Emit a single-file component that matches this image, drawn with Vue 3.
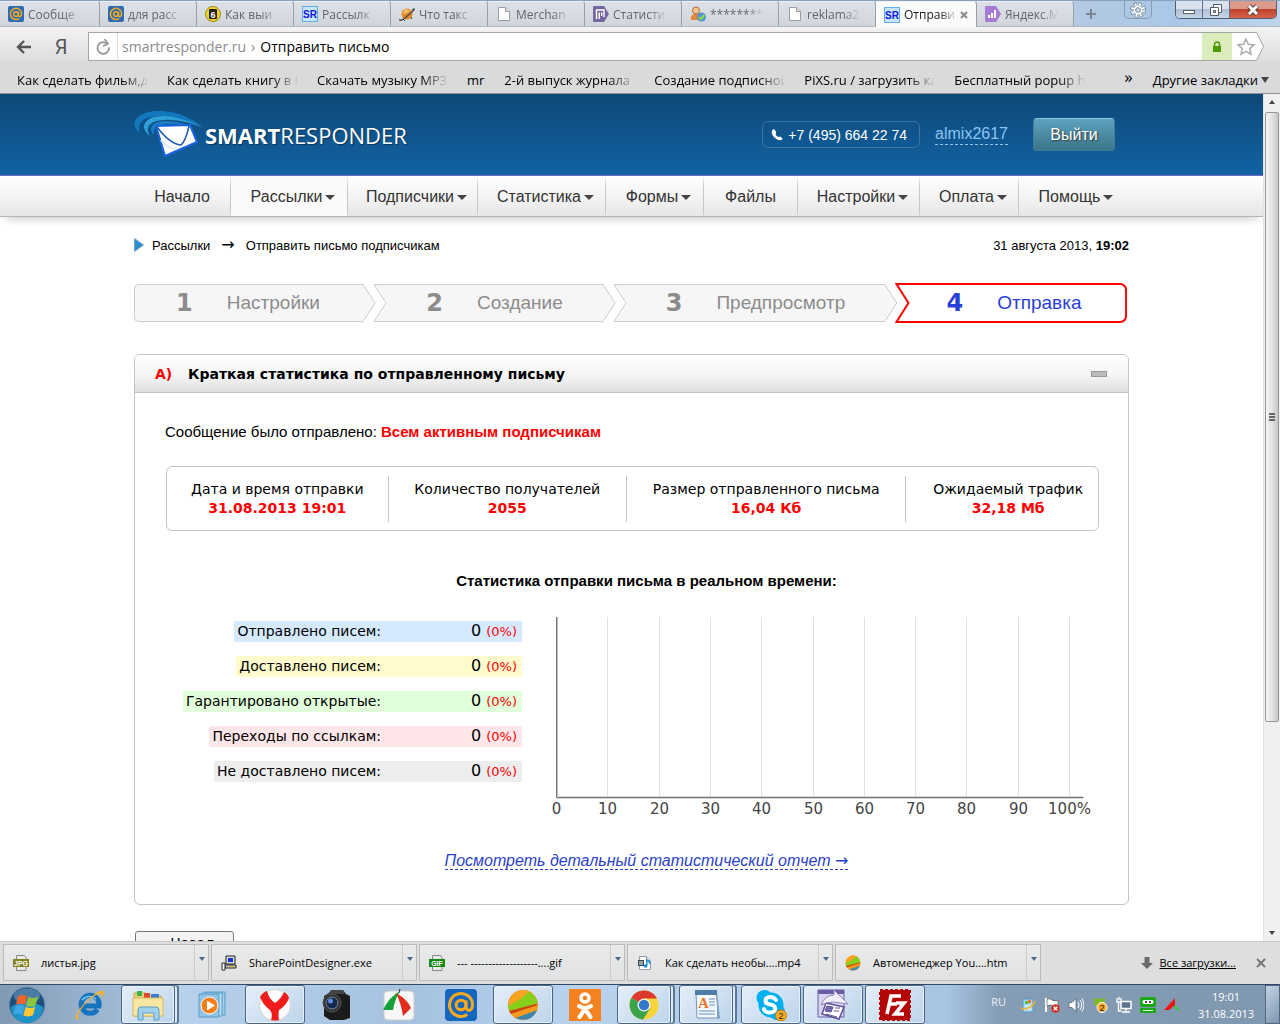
<template>
  <div class="desktop">
    <header class="titlebar">
      <div
        v-for="(tab, i) in tabs"
        :key="i"
        class="tab"
        :class="{ active: tab.active }"
      >
        <svg class="icon16" viewBox="0 0 16 16" v-html="icons[tab.icon]"></svg>
        <span class="tab-title">{{ tab.title }}</span>
        <button v-if="tab.active" class="tab-close" aria-label="Закрыть вкладку">
          <svg viewBox="0 0 8 8" width="8" height="8">
            <path d="M1 1l6 6M7 1l-6 6" stroke="#8a8a8a" stroke-width="2" />
          </svg>
        </button>
      </div>
      <button class="tab-new" aria-label="Новая вкладка">
        <svg viewBox="0 0 12 12" width="12" height="12">
          <path d="M6 1v10M1 6h10" stroke="#7b8694" stroke-width="2" />
        </svg>
      </button>
      <button class="gear" aria-label="Настройки браузера">
        <svg viewBox="0 0 16 16" width="16" height="16">
          <circle cx="8" cy="8" r="5.500" fill="none" stroke="#75818f" stroke-width="5" stroke-dasharray="2.700 1.620" />
          <circle cx="8" cy="8" r="5.500" fill="none" stroke="#fff" stroke-width="3.400" stroke-dasharray="1.700 2.620" stroke-dashoffset="-.5" />
          <circle cx="8" cy="8" r="4.200" fill="#fff" />
          <circle cx="8" cy="8" r="2.300" fill="#cfe0f2" stroke="#75818f" />
        </svg>
      </button>
      <div class="window-buttons">
        <button class="win" aria-label="Свернуть">
          <svg viewBox="0 0 14 14" width="14" height="14"><rect x="1.500" y="7.500" width="11" height="3" fill="#fff" stroke="#565d68" /></svg>
        </button>
        <button class="win" aria-label="Развернуть">
          <svg viewBox="0 0 14 14" width="14" height="14">
            <path d="M4.500 1.500h8v8h-8z" fill="#fff" stroke="#565d68" />
            <path d="M1.500 4.500h8v8h-8z" fill="#fff" stroke="#565d68" />
            <path d="M4.500 7.500h2v2h-2z" fill="#b9c9da" stroke="#565d68" />
          </svg>
        </button>
        <button class="win win-close" aria-label="Закрыть">
          <svg viewBox="0 0 14 14" width="14" height="14">
            <path d="M3 3l8 8M11 3l-8 8" stroke="#5a3a3a" stroke-width="5" />
            <path d="M3 3l8 8M11 3l-8 8" stroke="#fff" stroke-width="3" />
          </svg>
        </button>
      </div>
    </header>

    <div class="toolbar">
      <button class="tool" aria-label="Назад">
        <svg viewBox="0 0 16 14" width="16" height="14">
          <path d="M15 7H2M8 1L2 7l6 6" fill="none" stroke="#555" stroke-width="2.400" />
        </svg>
      </button>
      <button class="tool tool-ya">Я</button>
      <div class="address">
        <button class="reload" aria-label="Обновить">
          <svg viewBox="0 0 16 16" width="16" height="16">
            <path d="M14 8.500A5.800 5.800 0 1 1 8.200 3.200L12 4.200" fill="none" stroke="#999" stroke-width="1.800" />
            <path d="M9.500 0l3.500 4.600-5 2.600" fill="none" stroke="#999" stroke-width="1.700" />
          </svg>
        </button>
        <span class="host">smartresponder.ru</span>
        <span class="host">›</span>
        <span class="doc-title">Отправить письмо</span>
        <span class="lock">
          <svg viewBox="0 0 10 12" width="10" height="12">
            <path d="M2.500 6V3.500a2.500 2.500 0 0 1 5 0V6" fill="none" stroke="#4d9a00" stroke-width="1.500" />
            <path d="M1 5h8v6H1z" fill="#4d9a00" />
          </svg>
        </span>
      </div>
      <button class="star" aria-label="Добавить в закладки">
        <svg viewBox="0 0 32 29" width="32" height="29">
          <path d="M0 .500h24.500l7 14-7 14H0" fill="#fff" stroke="#a5a5a5" />
          <path d="M14 7l2.300 5.200 5.700.6-4.300 3.800 1.300 5.600-5-2.900-5 2.900 1.300-5.600L6 12.800l5.700-.6z" fill="#fff" stroke="#aaa" stroke-width="1.500" />
        </svg>
      </button>
    </div>

    <nav class="bookmarks">
      <a
        v-for="b in bookmarks"
        :key="b"
        href="#"
        class="bookmark"
        :class="{ long: b.length > 2 }"
      >{{ b }}</a>
      <button class="more-bookmarks">»</button>
      <button class="other-bookmarks">Другие закладки <i class="caret"></i></button>
    </nav>

    <div class="viewport">
      <main class="page">
        <div class="site-header">
          <div class="inner header-inner">
            <a href="#" class="logo">
              <svg viewBox="0 0 72 50" width="72" height="50">
                <path d="M7 23C-6 13 5 0 29 1c18 1 31 8 43 18C57 10 43 6 29 6 11 6 3 12 7 23z" fill="#1278bd" />
                <path d="M17 26C5 17 12 6 30 6c15 0 29 6 40 12-12-5-26-9-39-8-15 1-19 7-14 16z" fill="#2f9fd8" />
                <path d="M21 25C14 18 20 11 33 11c11 0 20 3 28 7-9-3-17-4-26-4-12 1-15 5-14 11z" fill="#1b7cc0" />
                <path d="M23 16l34-1 7 17-32 14z" fill="#fff" stroke="#1763e0" stroke-width="2" stroke-linejoin="round" />
                <path d="M24 17c6 8 14 17 24 18 4-3 6-10 8-19" fill="none" stroke="#1757b5" stroke-width="1.500" />
                <path d="M28 30c3 5 8 8 15 9" fill="none" stroke="#d9effc" stroke-width="2" />
              </svg>
              <span class="logo-text"><b>SMART</b>RESPONDER</span>
            </a>
            <div class="account">
              <span class="phone">
                <svg viewBox="0 0 12 12" width="12" height="12">
                  <path d="M2 .500C0 2 .500 5 3 8s6 4 8 2.500c.700-.500.600-1 0-1.500L9.300 7.800c-.600-.400-1-.300-1.500.2-.6.600-3-1.800-3.300-3 .700-.5.900-1 .600-1.600L4 1C3.500.200 2.700 0 2 .500z" fill="#fff" />
                </svg>
                +7 (495) 664 22 74
              </span>
              <a href="#" class="login">almix2617</a>
              <button class="exit">Выйти</button>
            </div>
          </div>
        </div>

        <nav class="site-nav">
          <div class="inner nav-inner">
            <a
              v-for="item in menu"
              :key="item.title"
              href="#"
              class="nav-item"
              :class="{ current: item.current, sub: item.sub }"
              :style="{ flexBasis: item.width + 'px' }"
            >{{ item.title }}<i v-if="item.sub" class="caret"></i></a>
          </div>
        </nav>

        <div class="content inner">
          <div class="crumbs">
            <svg viewBox="0 0 10 14" width="10" height="14">
              <path d="M.500.500l9 6.500-9 6.500z" fill="#2b8fcd" stroke="#7aa3bd" />
            </svg>
            <a href="#">Рассылки</a>
            <span class="crumb-arrow">→</span>
            <span>Отправить письмо подписчикам</span>
            <span class="date">31 августа 2013, <b>19:02</b></span>
          </div>

          <ol class="steps">
            <li
              v-for="(step, i) in steps"
              :key="step.title"
              class="step"
              :class="{ first: i === 0, active: step.active }"
              :style="{ flexGrow: step.width }"
            >
              <svg class="step-shape" :viewBox="`0 0 ${step.width} 40`" preserveAspectRatio="none">
                <path :d="stepPath(i, step.width)" />
              </svg>
              <span class="step-number">{{ i + 1 }}</span>
              <span class="step-title">{{ step.title }}</span>
            </li>
          </ol>

          <section class="panel">
            <div class="panel-head">
              <span class="panel-letter">A)</span>
              <h2>Краткая статистика по отправленному письму</h2>
              <button class="collapse" aria-label="Свернуть блок"></button>
            </div>
            <div class="panel-body">
              <p class="sent-to">Сообщение было отправлено: <b>Всем активным подписчикам</b></p>

              <div class="summary">
                <div
                  v-for="cell in summary"
                  :key="cell.title"
                  class="summary-cell"
                  :style="{ width: (cell.width / 933) * 100 + '%' }"
                >
                  <span>{{ cell.title }}</span>
                  <b>{{ cell.value }}</b>
                </div>
              </div>

              <h3>Статистика отправки письма в реальном времени:</h3>

              <div class="realtime">
                <ul class="counters">
                  <li v-for="c in counters" :key="c.title" :class="c.color">
                    <span class="counter-title">{{ c.title }}</span>
                    <span class="counter-value">0</span>
                    <span class="counter-percent">(0%)</span>
                  </li>
                </ul>
                <svg class="chart" viewBox="0 0 550 206" width="550" height="206">
                  <path v-for="n in 10" :key="n" :d="`M${gridX(n)} 1v182`" stroke="#e0e0e0" />
                  <path d="M6 181.500h527" stroke="#d5d5d5" stroke-width="3" />
                  <path d="M6.500 1v180.500h527" fill="none" stroke="#777" />
                  <path d="M7.500 1v179" stroke="#bbb" />
                  <text v-for="n in 11" :key="n" :x="gridX(n - 1)" y="198">{{ (n - 1) * 10 }}{{ n === 11 ? '%' : '' }}</text>
                </svg>
              </div>

              <p class="report"><a href="#">Посмотреть детальный статистический отчет <span class="arrow">→</span></a></p>
            </div>
          </section>

          <button class="back">← Назад</button>
        </div>
      </main>

      <div class="scrollbar">
        <i class="scroll-up"></i>
        <div class="thumb"><i></i><i></i><i></i></div>
        <i class="scroll-down"></i>
      </div>
    </div>

    <div class="downloads">
      <div v-for="d in downloads" :key="d.name" class="download">
        <svg class="icon16" viewBox="0 0 16 16" v-html="icons[d.icon]"></svg>
        <span class="download-name">{{ d.name }}</span>
        <button class="download-menu" aria-label="Действия"><i class="caret"></i></button>
      </div>
      <div class="downloads-right">
        <svg viewBox="0 0 12 12" width="12" height="12"><path d="M3.500 0h5v6H12l-6 6-6-6h3.500z" fill="#6b6b6b" /></svg>
        <a href="#">Все загрузки...</a>
        <button class="downloads-close" aria-label="Закрыть панель">
          <svg viewBox="0 0 10 10" width="10" height="10"><path d="M1 1l8 8M9 1L1 9" stroke="#777" stroke-width="2" /></svg>
        </button>
      </div>
    </div>

    <footer class="taskbar">
      <button class="start" aria-label="Пуск">
        <svg viewBox="0 0 36 36" width="36" height="36">
          <circle cx="18" cy="18" r="17.500" fill="#1d4f7c" stroke="#4c7ba3" />
          <path d="M2 20a16 16 0 0 0 32 0c-8-6-24-6-32 0z" fill="#1f92c8" />
          <ellipse cx="18" cy="9" rx="13" ry="7.500" fill="#6e9cc0" opacity=".6" />
          <path d="M9 9.500c3.500-2 6-2 9-.5L15.700 18C13 16.300 10.500 16.300 7 18z" fill="#f0642a" />
          <path d="M19.300 9.800c3.500 1.700 6 1.700 9.700-.3L26.500 18.500c-3.500 1.700-6.500 1.700-9.500 0z" fill="#8cc63e" />
          <path d="M6.500 19.300c3.500-1.700 6-1.700 9 0L13.300 28c-3-1.700-5.500-1.700-9-.2z" fill="#3fa7e6" />
          <path d="M16.700 19.800c3.200 1.700 6.200 1.700 9.500 0L24 28c-3.500 1.900-6.500 1.900-9.700.2z" fill="#fdc82f" />
        </svg>
      </button>
      <button
        v-for="app in apps"
        :key="app.icon"
        class="app"
        :class="{ open: app.open, stacked: app.stack }"
        :aria-label="app.label"
      >
        <svg viewBox="0 0 32 32" width="32" height="32" v-html="icons[app.icon]"></svg>
      </button>

      <div class="tray">
        <span class="lang">RU</span>
        <svg v-for="t in tray" :key="t" class="icon16" viewBox="0 0 16 16" v-html="icons[t]"></svg>
        <div class="clock">
          <span>19:01</span>
          <span>31.08.2013</span>
        </div>
        <button class="show-desktop" aria-label="Показать рабочий стол"></button>
      </div>
    </footer>
  </div>
</template>

<script setup>
const tabs = [
  { title: 'Сообще', icon: 'mail' },
  { title: 'для расс', icon: 'mail' },
  { title: 'Как выи', icon: 'coin' },
  { title: 'Рассылк', icon: 'sr' },
  { title: 'Что такс', icon: 'planet' },
  { title: 'Merchan', icon: 'file' },
  { title: 'Статисти', icon: 'statist' },
  { title: '*********', icon: 'user' },
  { title: 'reklama2', icon: 'file' },
  { title: 'Отправи', icon: 'sr', active: true },
  { title: 'Яндекс.М', icon: 'metrika' }
]

const bookmarks = [
  'Как сделать фильм,д',
  'Как сделать книгу в I',
  'Скачать музыку MP3',
  'mr',
  '2-й выпуск журнала',
  'Создание подписной',
  'PiXS.ru / загрузить ка',
  'Бесплатный popup h'
]

const menu = [
  { title: 'Начало', width: 97 },
  { title: 'Рассылки', width: 117, sub: true, current: true },
  { title: 'Подписчики', width: 130, sub: true },
  { title: 'Статистика', width: 128, sub: true },
  { title: 'Формы', width: 98, sub: true },
  { title: 'Файлы', width: 94 },
  { title: 'Настройки', width: 122, sub: true },
  { title: 'Оплата', width: 99, sub: true },
  { title: 'Помощь', width: 106, sub: true }
]

const steps = [
  { title: 'Настройки', width: 243 },
  { title: 'Создание', width: 244 },
  { title: 'Предпросмотр', width: 286 },
  { title: 'Отправка', width: 233, active: true }
]

const summary = [
  { title: 'Дата и время отправки', value: '31.08.2013 19:01', width: 222 },
  { title: 'Количество получателей', value: '2055', width: 239 },
  { title: 'Размер отправленного письма', value: '16,04 Кб', width: 280 },
  { title: 'Ожидаемый трафик', value: '32,18 Мб', width: 192 }
]

const counters = [
  { title: 'Отправлено писем:', color: 'blue' },
  { title: 'Доставлено писем:', color: 'yellow' },
  { title: 'Гарантировано открытые:', color: 'green' },
  { title: 'Переходы по ссылкам:', color: 'pink' },
  { title: 'Не доставлено писем:', color: 'grey' }
]

const downloads = [
  { name: 'листья.jpg', icon: 'jpg' },
  { name: 'SharePointDesigner.exe', icon: 'exe' },
  { name: '--- -------------------....gif', icon: 'gif' },
  { name: 'Как сделать необы....mp4', icon: 'mp4' },
  { name: 'Автоменеджер You....htm', icon: 'ball' }
]

const apps = [
  { icon: 'ie', label: 'Internet Explorer' },
  { icon: 'explorer', label: 'Проводник', open: true, stack: true },
  { icon: 'player', label: 'Проигрыватель' },
  { icon: 'yandex', label: 'Яндекс.Браузер', open: true },
  { icon: 'camera', label: 'Камера' },
  { icon: 'faststone', label: 'Захват экрана' },
  { icon: 'agent', label: 'Почта' },
  { icon: 'automanager', label: 'Автоменеджер', open: true },
  { icon: 'ok', label: 'Одноклассники' },
  { icon: 'chrome', label: 'Chrome', open: true, stack: true },
  { icon: 'wordpad', label: 'WordPad', open: true, stack: true },
  { icon: 'skype', label: 'Skype', open: true },
  { icon: 'designer', label: 'SharePoint Designer', open: true },
  { icon: 'filezilla', label: 'FileZilla', open: true }
]

const tray = ['trayPaint', 'trayFlag', 'traySound', 'traySkype', 'trayNet', 'trayRobot', 'trayTriangle']

const gridX = (n) => 6.5 + Math.round(n * 51.3)

// Chevron outline: the first step has a flat left side, the last one a flat right side
const stepPath = (i, w) => {
  if (i === 0) {
    return `M4.500 1.500H${w - 13}l12 18.500-12 18.500H4.500a4 4 0 0 1-4-4V5.500a4 4 0 0 1 4-4z`
  }
  if (i === steps.length - 1) {
    return `M1.500 1H${w - 7}a6 6 0 0 1 6 6v26a6 6 0 0 1-6 6H1.500l12-19z`
  }
  return `M1 1.500H${w - 13}l12 18.500-12 18.500H1l12-18.500z`
}

const file = '<path d="M2.500 1.500h7l4 4v9h-11z" fill="#fff" stroke="#9a9da3"/><path d="M9.500 1.500v4h4" fill="#e4e4e4" stroke="#9a9da3"/>'
const at = (cx, cy, r, w) => `<circle cx="${cx}" cy="${cy}" r="${r * 0.42}" fill="none" stroke="#f8a91f" stroke-width="${w}"/><path d="M${cx + r * 0.45} ${cy - r * 0.4}v${r * 0.55}c0 ${r * 0.5} ${r * 0.55} ${r * 0.4} ${r * 0.55} ${-r * 0.2}A${r} ${r} 0 1 0 ${cx + r * 0.55} ${cy + r * 0.83}" fill="none" stroke="#f8a91f" stroke-width="${w}"/>`
const printer = (color, name) => `<path d="M3.500.500h8l1.500 2v13h-9.500z" fill="#e9e9e9" stroke="#888"/><path d="M0 4h16v8H0z" fill="${color}"/><text x="8" y="10.500" font-size="7" font-weight="700" fill="#fff" text-anchor="middle" font-family="Liberation Sans">${name}</text>`
const ball = (s) => `<g transform="scale(${s})"><circle cx="16" cy="16" r="15" fill="#ee8c1c"/><path d="M2.500 11Q7 1 16 1q6 0 10 4L3 18Q1 15 2.500 11z" fill="#f8a421"/><path d="M1 17l11-6L22 3q6 2 9 11L4 22Q1 20 1 17z" fill="#86cf1b"/><path d="M2 22l27-7 2 1L4 25z" fill="#c9450f"/><path d="M8 29l22-8Q24 35 8 29z" fill="#3b88a8"/><path d="M4 25l27-9-1 5L8 29z" fill="#f39a1f"/></g>`

const icons = {
  file,
  mail: `<rect width="16" height="16" rx="2" fill="#2b6cb2"/>${at(8, 8, 5.6, 1.5)}`,
  coin: '<circle cx="8" cy="8" r="7.500" fill="#f2d32b" stroke="#a08a1a"/><rect x="4" y="3" width="8" height="10" rx="1" fill="#222"/><text x="8" y="11.500" font-size="9" font-weight="700" fill="#fff" text-anchor="middle" font-family="Liberation Sans">6</text>',
  sr: '<rect x=".5" y=".5" width="15" height="15" fill="#c6e6fb" stroke="#62aee6"/><text x="8" y="12" font-size="10" font-weight="700" fill="#1414e6" text-anchor="middle" font-family="Liberation Sans">SR</text>',
  planet: '<circle cx="8" cy="8" r="5.500" fill="#e18a2a"/><path d="M5 4q3-2 6 1-4 3-7 3z" fill="#f7bd66"/><path d="M13 4c3-2 3-1 1 1L6 12c-4 3-6 3-5 1" fill="none" stroke="#444" stroke-width="1.200"/><path d="M4 13l2 2M12 11l1 2" stroke="#444"/>',
  statist: '<path d="M1 0h10l5 8-5 8H1q-1 0-1-1V1q0-1 1-1z" fill="#75669f"/><path d="M3.500 13V4h7.500V11M6.200 13V6.500M8.700 10V6.500" fill="none" stroke="#fff" stroke-width="1.400"/>',
  metrika: '<path d="M1 0h10l5 8-5 8H1q-1 0-1-1V1q0-1 1-1z" fill="#a77bd3"/><path d="M3 12V9h2v3zM6 12V7h2v5zM9 12V4h2v8z" fill="#fff"/>',
  user: '<path d="M1 14c-1-5 2-6 5-6s5 2 5 6z" fill="#e8853c"/><circle cx="6" cy="4.500" r="3.500" fill="#f4c48c" stroke="#b0683a"/><circle cx="11.500" cy="11" r="4.500" fill="#4d94d2"/><path d="M9 11l2 2 3.500-4" fill="none" stroke="#8bd84a" stroke-width="2"/>',
  jpg: printer('#85831c', 'JPG'),
  gif: printer('#138a13', 'GIF'),
  exe: '<path d="M5 1h9v8H5z" fill="#ddd" stroke="#222"/><path d="M7 3h5v4H7z" fill="#1234d8"/><path d="M4 10h11v3H4z" fill="#ccc" stroke="#222"/><path d="M1 8h3v7H1z" fill="#fff" stroke="#222"/><path d="M9 11.500h4" stroke="#d8c400"/>',
  mp4: `${file}<path d="M1 5h6v6H1z" fill="#345"/><path d="M2 7h4M2 9h4" stroke="#fff"/><circle cx="8.500" cy="11" r="1.800" fill="#1d8fdc"/><path d="M9.800 11V5q3 1 3 4" fill="none" stroke="#1d8fdc" stroke-width="1.500"/>`,
  ball: ball(0.5),
  ie: '<path d="M24.500 20.500A9 9 0 1 1 26 17H9" fill="none" stroke="#1673bd" stroke-width="5"/><path d="M9 11c3-4 10-5 14-1" fill="none" stroke="#7cc8f0" stroke-width="1.500"/><path d="M6 30c-6 2-4-5 4-14S27 0 30 2c2 1 0 5-2 8 1-4 0-6-2-5C20 6 8 18 5 26c0 2 0 3 1 4z" fill="#f3b32a"/>',
  explorer: '<path d="M2 4h11l2 3h14v20H2z" fill="#eccf76" stroke="#c9a548"/><path d="M5 2h5v5H5z" fill="#38b54a"/><path d="M12 4h6v5h-6z" fill="#e0482f"/><path d="M19 5h8v5h-8z" fill="#3b7fd0"/><path d="M1 9h30v18H1z" fill="#f9e7a1" stroke="#d8b95e"/><path d="M6 31V21q0-3 3-3h15q3 0 3 3v10h-5v-7H11v7z" fill="#9dd1ee" stroke="#5c9dc5"/>',
  player: '<path d="M8 3h20v23H8z" fill="#9dcbe8" stroke="#5b9cc8"/><path d="M5 4h20v23H5z" fill="#bcdff2" stroke="#5b9cc8"/><path d="M2 5h20v23H2z" fill="#8fc3e4" stroke="#5b9cc8"/><circle cx="12.500" cy="16.500" r="8.500" fill="#f57f17" stroke="#fff"/><path d="M10 11.500l8 5-8 5z" fill="#fff"/>',
  yandex: '<circle cx="16" cy="16" r="15.500" fill="#fff" stroke="#d5d5d5"/><path d="M1 8Q4 3 8 2q2 8 8 12 6-4 9-11 4 2 5 6-3 8-10 12-1 4 0 10-4 1-8 0 2-6-1-10Q4 16 1 8z" fill="#f01c1c"/>',
  camera: '<path d="M3 7l5-3 2-3h12l3 4 4 2v22l-6 2H9l-6-4z" fill="#1b1b1b"/><path d="M10 1h12l2 4H8z" fill="#444"/><circle cx="11" cy="14" r="9" fill="#333" stroke="#555"/><circle cx="11" cy="14" r="6" fill="#16294a" stroke="#7a8aa0"/><circle cx="9.500" cy="12" r="2.500" fill="#5a8fe0"/>',
  faststone: '<rect x="1" y="2" width="30" height="29" rx="4" fill="#f7f7f7" stroke="#ccc"/><path d="M16 4l1-4" stroke="#222"/><path d="M17 2Q6 8 0 21l10 0q2-11 7-19z" fill="#18a03a"/><path d="M13 4q12 7 15 15l-8 8Q18 14 13 4z" fill="#e12b1c"/>',
  agent: `<rect width="32" height="32" rx="4" fill="#1467bd"/>${at(16, 16, 11.5, 3)}`,
  automanager: ball(1),
  ok: '<path d="M0 0h32v32H0z" fill="#f58220"/><circle cx="16" cy="9" r="4" fill="none" stroke="#fff" stroke-width="3.500"/><path d="M10 17q6 4 12 0M16 20l-5.500 8M16 20l5.500 8" fill="none" stroke="#fff" stroke-width="4" stroke-linecap="round"/>',
  chrome: '<circle cx="16" cy="16" r="14.500" fill="#fbd43b"/><path d="M16 16L3.500 8.700A14.500 14.500 0 0 0 15 30.500l7-11z" fill="#3aa44a"/><path d="M16 16L3.500 8.700A14.500 14.500 0 0 1 29 9.500H16z" fill="#dc3a2c"/><circle cx="16" cy="16" r="6.500" fill="#f4f4f4"/><circle cx="16" cy="16" r="5.200" fill="#3478c8"/>',
  wordpad: '<path d="M6 3h20l3 26H7z" fill="#f4f8fc" stroke="#7595b5"/><path d="M5 1h22v5H5z" fill="#4f7da8"/><path d="M27 3l3 26-3 1z" fill="#7fa3c6"/><text x="8" y="19" font-size="15" font-weight="700" fill="#e8761d" font-family="Liberation Serif">A</text><path d="M19 10h6M19 13h6M19 16h6M9 22h16M9 25h16" stroke="#5f8fc0"/>',
  skype: '<circle cx="16" cy="16" r="12.500" fill="#00aff0"/><circle cx="9.500" cy="9" r="8" fill="#00aff0"/><circle cx="22" cy="23" r="8" fill="#00aff0"/><path d="M21 11q-2-3-6-3c-6 0-6 7 0 7.500 7 .5 7 8 0 8-4 0-6-2-6-3.500" fill="none" stroke="#fff" stroke-width="4" stroke-linecap="round"/><circle cx="26" cy="26.500" r="5.500" fill="#fbac27" stroke="#c77b00"/><text x="26" y="30" font-size="9" fill="#222" text-anchor="middle" font-family="Liberation Sans">2</text>',
  designer: '<path d="M1 1h26v27H1z" fill="#d9d4ee" stroke="#6a5da8"/><path d="M1 1h26v4H1z" fill="#6a5da8"/><path d="M9 14l18 4-5 12-17-5z" fill="#fff" stroke="#5d519a" stroke-width="1.500"/><path d="M10 17l6 1-2 5-6-1zM18 19h5M17 22h5M9 25l11 3" fill="#7468b0" stroke="#5d519a"/><path d="M4 16Q8 6 17 6V1l14 14-14-2q-8 0-13 3z" fill="#f2f0fa" stroke="#8d84bb"/>',
  filezilla: '<path d="M1 1h30v30H1z" fill="#b50606" stroke="#b50606" stroke-width="2" stroke-dasharray="3 2"/><path d="M8 25L12 7h10M10 15h8M17 14h8L16 25h9" fill="none" stroke="#fff" stroke-width="3.600"/>',
  trayPaint: '<path d="M3 2h10v13H3z" fill="#a8d8f2" stroke="#5598c0"/><path d="M8 3h3v3H8z" fill="#e8762c"/><path d="M5 4h3v3H5z" fill="#58b947"/><path d="M5 9h6M5 12h6" stroke="#fff"/><path d="M1 10c0 5 12 1 14-6" fill="none" stroke="#f3b32a" stroke-width="1.500"/>',
  trayFlag: '<path d="M2 1v14" stroke="#fff" stroke-width="2"/><path d="M3 2q3-1 5 1t6 0v7q-3 1-5-1t-6 0z" fill="#fff" stroke="#555" stroke-width=".7"/><circle cx="11.500" cy="11.500" r="4.200" fill="#d92b1f"/><path d="M9.800 9.800l3.400 3.400M13.200 9.800l-3.400 3.400" stroke="#fff" stroke-width="1.500"/>',
  traySound: '<path d="M1 5.500h3l4-4v13l-4-4H1z" fill="#fff" stroke="#4d5a6a" stroke-width=".7"/><path d="M10 5q2 3 0 6M12 3q3.500 5 0 10M14 1.500q4 6.500 0 13" fill="none" stroke="#fff"/>',
  traySkype: '<path d="M1 1l5 1 7-1v8L3 9z" fill="#7bbb2c"/><circle cx="10" cy="10.500" r="5" fill="#fbac27" stroke="#fff"/><text x="10" y="14" font-size="9" fill="#222" text-anchor="middle" font-family="Liberation Sans">2</text>',
  trayNet: '<path d="M5 4.500h10v7H5z" fill="#5d7590" stroke="#fff" stroke-width="1.500"/><path d="M10 12v3M6 15h8M2.500 6v8h3M1 1v4h4V1M3 0v3" fill="none" stroke="#fff" stroke-width="1.300"/>',
  trayRobot: '<rect x="0" y="0" width="16" height="10" rx="2" fill="#1aa81a"/><rect x="0" y="11" width="16" height="5" rx="1" fill="#1aa81a"/><rect x="2.500" y="3" width="11" height="4" rx="2" fill="#fff"/><path d="M5 5h2M9 5h2" stroke="#111" stroke-width="1.500"/><path d="M3 13.500h10" stroke="#d8f5c8"/>',
  trayTriangle: '<path d="M11 1v7L5 13H0z" fill="#f01414"/><path d="M11 8l5 6-3-1-3-3z" fill="#16d416"/>'
}
</script>

<style>
body {
  margin: 0;
}
</style>

<style scoped>
.desktop {
  display: flex;
  flex-direction: column;
  height: 100vh;
  overflow: hidden;
  font-family: 'Liberation Sans', Arial, sans-serif;
  color: #000;
}

button {
  margin: 0;
  padding: 0;
  border: none;
  background: none;
  font: inherit;
  color: inherit;
  display: flex;
  align-items: center;
  justify-content: center;
  flex-shrink: 0;
}

a {
  color: inherit;
  text-decoration: none;
}

.icon16 {
  width: 16px;
  height: 16px;
  flex-shrink: 0;
}

.caret {
  display: inline-block;
  border: 4px solid transparent;
  border-top: 6px solid #444;
  border-bottom: none;
}

/* Browser window */
.titlebar,
.toolbar,
.bookmarks,
.downloads,
.taskbar {
  display: flex;
  flex-shrink: 0;
  font-family: 'Open Sans', 'Noto Sans', sans-serif;
}

.titlebar {
  height: 27px;
  box-sizing: border-box;
  border-top: 1px solid #8ba0bb;
  border-bottom: 1px solid #b3b7bd;
  background: linear-gradient(90deg, #b4c9e2 0%, #b4c9e2 84%, #a9c8e8 92%, #bed5ec 100%);
}

.tab {
  display: flex;
  align-items: center;
  width: 97px;
  box-sizing: border-box;
  padding-left: 8px;
  gap: 4px;
  font-size: 12px;
  color: #62666d;
  background: linear-gradient(#dce1e8, #d1d6dd);
  border-right: 1px solid #989fa9;
  border-top: 1px solid #eef1f5;
  border-top-right-radius: 4px;
}

.tab:first-child {
  width: 100px;
}

.tab.active {
  width: 101px;
  height: 27px;
  padding-bottom: 1px;
  background: #fafafa;
  color: #222;
}

.tab-title {
  width: 60px;
  overflow: hidden;
  white-space: nowrap;
  mask-image: linear-gradient(90deg, #000 36px, transparent 54px);
}

.tab.active .tab-title {
  width: 50px;
}

.tab-close {
  margin-left: 2px;
}

.tab-new {
  width: 34px;
}

.gear {
  width: 28px;
  height: 18px;
  margin-left: 16px;
  border: 1px solid #8b9cb3;
  border-top: none;
  border-radius: 0 0 5px 5px;
}

.window-buttons {
  display: flex;
  height: 17px;
  margin-left: auto;
  margin-right: 3px;
  border: 1px solid #4f5f73;
  border-top: none;
  border-radius: 0 0 5px 5px;
  overflow: hidden;
}

.win {
  width: 27px;
  border-right: 1px solid #5f6d80;
  background: linear-gradient(#d9e3ef 45%, #aebfd3 50%, #c5d6e8);
}

.win-close {
  width: 46px;
  border-right: none;
  background: linear-gradient(#dc9a8b 45%, #c0412a 50%, #d3644b);
}

.toolbar {
  height: 35px;
  box-sizing: border-box;
  align-items: center;
  padding: 4px 16px 0 12px;
  background: linear-gradient(#f3f3f3, #dcdddf);
}

.tool {
  width: 24px;
  margin-right: 13px;
}

.tool-ya {
  margin-right: 15px;
  font-family: Roboto, sans-serif;
  font-size: 20px;
  color: #555;
}

.address {
  display: flex;
  flex: 1;
  align-items: center;
  height: 29px;
  box-sizing: border-box;
  border: 1px solid #a5a5a5;
  border-right: none;
  background: #fff;
  font-size: 14px;
}

.reload {
  width: 29px;
  height: 27px;
  border-right: 1px solid #ddd;
  margin-right: 4px;
}

.host {
  color: #8d8d8d;
  margin-right: 5px;
}

.lock {
  display: flex;
  align-items: center;
  justify-content: center;
  width: 30px;
  height: 27px;
  margin-left: auto;
  background: #dcedbd;
}

.star {
  height: 29px;
}

.bookmarks {
  height: 32px;
  box-sizing: border-box;
  align-items: center;
  padding: 4px 11px 0 17px;
  gap: 20px;
  background: #d9dadc;
  border-bottom: 1px solid #8b8f94;
  font-size: 13px;
}

.bookmark {
  white-space: nowrap;
}

.bookmark.long {
  width: 130px;
  mask-image: linear-gradient(90deg, #000 105px, transparent 132px);
}

.more-bookmarks {
  margin-left: auto;
  padding-bottom: 6px;
  font-size: 17px;
  line-height: 20px;
}

.other-bookmarks {
  gap: 3px;
}

/* Page */
.viewport {
  display: flex;
  flex: 1;
  min-height: 0;
  background: #fff;
}

.page {
  flex: 1;
  min-width: 0;
  overflow: hidden;
}

.inner {
  width: 100%;
  max-width: 995px;
  margin: 0 auto;
}

.site-header {
  height: 81px;
  background: linear-gradient(#0d4977, #1262a4);
  border-bottom: 1px solid #6f6cc0;
}

.header-inner {
  display: flex;
  align-items: center;
  justify-content: space-between;
  height: 81px;
}

.logo {
  display: flex;
  align-items: center;
  margin-left: -1px;
  color: #fff;
}

.logo-text {
  font-family: 'Open Sans', sans-serif;
  font-size: 22px;
  text-shadow: 1px 1px 1px #0a3459;
}

.account {
  display: flex;
  align-items: center;
  padding-right: 14px;
}

.phone {
  display: flex;
  align-items: center;
  gap: 5px;
  height: 25px;
  padding: 0 12px 0 8px;
  border: 1px solid #3d75a5;
  border-radius: 6px;
  color: #fff;
  font-size: 14px;
  white-space: nowrap;
}

.login {
  margin: 0 25px 0 15px;
  padding-bottom: 1px;
  color: #8cc4f4;
  font-size: 16px;
  border-bottom: 1px dashed #8cc4f4;
}

.exit {
  width: 82px;
  height: 33px;
  border: 1px solid #3f7b9c;
  border-top-color: #8bc3da;
  border-radius: 4px;
  background: linear-gradient(#5ea3bf, #3a7488);
  color: #fff;
  font-size: 16px;
  text-shadow: 1px 1px 2px #333;
}

.site-nav {
  height: 40px;
  background: linear-gradient(#fff, #f4f4f4 50%, #e6e6e6);
  border-bottom: 1px solid #b5b5b5;
  box-shadow: 0 8px 10px -6px #ccc;
}

.nav-inner {
  display: flex;
  height: 40px;
}

.nav-item {
  display: flex;
  align-items: center;
  justify-content: center;
  gap: 3px;
  box-sizing: border-box;
  padding-top: 2px;
  font-size: 16px;
  color: #333;
  border-right: 1px solid;
  border-image: linear-gradient(transparent, #c8c8c8 30%, #c8c8c8 90%, transparent) 1;
}

.nav-item.sub {
  padding-left: 8px;
}

.nav-item .caret {
  border-width: 5px 5px 0;
}

.nav-item:last-child {
  border: none;
}

.nav-item.current {
  background: #fafafa;
}

.content {
  position: relative;
  z-index: 0;
  padding-top: 20px;
}

.crumbs {
  display: flex;
  align-items: center;
  gap: 8px;
  height: 16px;
  font-size: 13px;
}

.crumb-arrow {
  margin: 0 3px;
}

.crumb-arrow,
.arrow {
  font-family: 'DejaVu Sans', sans-serif;
  font-size: 16px;
  line-height: 16px;
}

.date {
  margin-left: auto;
}

.steps {
  display: flex;
  height: 40px;
  margin: 30px 2px 0 0;
  padding: 0;
  list-style: none;
}

.step {
  position: relative;
  display: flex;
  align-items: center;
  justify-content: center;
  gap: 34px;
  flex-basis: 0;
  margin-left: -3px;
  color: #8c8c8c;
}

.step.first {
  margin-left: 0;
}

.step.first .step-title {
  padding-right: 14px;
}

.step-shape {
  position: absolute;
  inset: 0;
  width: 100%;
  height: 100%;
  z-index: -1;
  fill: #f6f6f6;
  stroke: #ccc;
}

.step.active {
  color: #2840d8;
}

.step.active .step-number {
  padding-left: 6px;
}

.step.active .step-shape {
  fill: #fff;
  stroke: #f00;
  stroke-width: 2px;
}

.step-number {
  font-family: 'DejaVu Sans', Verdana, sans-serif;
  font-size: 24px;
  font-weight: 700;
}

.step-title {
  font-size: 19px;
}

.panel {
  margin-top: 31px;
  border: 1px solid #c4c4c4;
  border-radius: 6px;
}

.panel-head {
  display: flex;
  align-items: center;
  height: 37px;
  padding: 0 21px 0 20px;
  border-bottom: 1px solid #c4c4c4;
  border-radius: 5px 5px 0 0;
  background: linear-gradient(#fff, #f6f6f6 50%, #e0e0e0);
  font-family: 'DejaVu Sans', Verdana, sans-serif;
  font-size: 14px;
}

.panel-letter {
  width: 33px;
  color: #f00;
  font-weight: 700;
}

.panel-head h2 {
  margin: 0;
  font-size: 14px;
}

.collapse {
  width: 16px;
  height: 6px;
  margin-left: auto;
  border: 1px solid #999;
  background: #bbb;
}

.panel-body {
  padding: 29px 0 34px 30px;
}

.sent-to {
  margin: 0;
  font-size: 15px;
  line-height: 20px;
}

.sent-to b {
  color: #f00;
}

.summary {
  display: flex;
  margin: 24px 29px 0 1px;
  padding: 9px 0 8px;
  border: 1px solid #c4c4c4;
  border-radius: 6px;
  font-family: 'DejaVu Sans', Verdana, sans-serif;
  font-size: 14px;
  line-height: 19px;
}

.summary-cell {
  display: flex;
  flex-direction: column;
  box-sizing: border-box;
  align-items: center;
  padding: 4px 0;
  border-right: 1px solid #c4c4c4;
  white-space: nowrap;
}

.summary-cell:last-child {
  border-right: none;
  padding-left: 12px;
}

.summary-cell b {
  color: #f00;
}

h3 {
  margin: 40px 0 0;
  font-size: 15px;
  line-height: 20px;
  text-align: center;
}

.realtime {
  display: flex;
  margin-top: 25px;
}

.counters {
  display: flex;
  flex-direction: column;
  align-items: flex-end;
  gap: 14px;
  width: 357px;
  margin: 5px 28px 0 0;
  padding: 0;
  list-style: none;
  font-family: 'DejaVu Sans', Verdana, sans-serif;
}

.counters li {
  display: flex;
  align-items: baseline;
  height: 21px;
  padding: 0 5px 0 3px;
  line-height: 19px;
}

.counter-title {
  margin-right: 90px;
  font-size: 14px;
}

.counter-value {
  margin-right: 5px;
  font-size: 16px;
}

.counter-percent {
  font-size: 13px;
  color: #f00;
}

.blue {
  background: #d6eaff;
}

.yellow {
  background: #fffbcc;
}

.green {
  background: #e0ffda;
}

.pink {
  background: #ffe7e9;
}

.grey {
  background: #ededed;
}

.chart {
  flex-shrink: 0;
}

.chart text {
  font-family: 'DejaVu Sans', Verdana, sans-serif;
  font-size: 15px;
  fill: #444;
  text-anchor: middle;
}

.report {
  margin: 30px 0 0;
  text-align: center;
  font-size: 16px;
  font-style: italic;
  line-height: 18px;
  color: #2b3fc8;
}

.report a {
  border-bottom: 1px dashed #2b3fc8;
}

.back {
  width: 99px;
  height: 24px;
  margin: 26px 0 0 1px;
  border: 1px solid #777;
  border-radius: 3px;
  background: #f3f3f3;
  font-family: 'DejaVu Sans', Verdana, sans-serif;
  font-size: 14px;
}

.scrollbar {
  display: flex;
  flex-direction: column;
  align-items: center;
  width: 17px;
  box-sizing: border-box;
  padding: 6px 0;
  background: #f0f0f0;
  border-left: 1px solid #e3e3e3;
}

.scroll-up,
.scroll-down {
  border: 3px solid transparent;
}

.scroll-up {
  border-top: none;
  border-bottom: 4px solid #444;
  margin-bottom: 8px;
}

.scroll-down {
  border-bottom: none;
  border-top: 4px solid #444;
  margin-top: auto;
}

.thumb {
  display: flex;
  flex-direction: column;
  align-items: center;
  justify-content: center;
  gap: 1px;
  width: 14px;
  height: 73%;
  box-sizing: border-box;
  border: 1px solid #979797;
  border-radius: 2px;
  background: linear-gradient(90deg, #f3f3f3, #e3e3e5 50%, #c6c7ca);
}

.thumb i {
  width: 6px;
  height: 2px;
  background: #666;
}

/* Downloads shelf */
.downloads {
  height: 43px;
  box-sizing: border-box;
  padding: 2px 0 3px 3px;
  gap: 2px;
  border-top: 1px solid #c8c8c8;
  background: #dedede;
  font-size: 11px;
}

.download {
  display: flex;
  align-items: center;
  width: 206px;
  box-sizing: border-box;
  padding-left: 9px;
  border: 1px solid #bbb;
  background: linear-gradient(#e9eaea, #e0e1e2);
}

.download-name {
  flex: 1;
  margin-left: 12px;
  white-space: nowrap;
}

.download-menu {
  align-self: stretch;
  align-items: flex-start;
  width: 14px;
  padding-top: 12px;
  border-left: 1px solid #ccc;
}

.download-menu .caret {
  border-width: 4px 3px 0;
  border-top-color: #4a6790;
}

.downloads-right {
  display: flex;
  align-items: center;
  gap: 7px;
  margin-left: auto;
  padding-right: 14px;
}

.downloads-right a {
  text-decoration: underline;
}

.downloads-close {
  margin-left: 13px;
}

/* Taskbar */
.taskbar {
  height: 40px;
  box-sizing: border-box;
  gap: 2px;
  border-top: 1px solid #2e4a68;
  background: linear-gradient(90deg, #8199b3 0, #a3bcd8 10%, #b7d1ec 14%, #a6c2df 32%, #b9d3ee 45%, #a9c5e2 70%, #a9c5e2 74%, #859cb5 78%, #8097b0 100%);
}

.start {
  width: 57px;
  padding-right: 3px;
  box-sizing: border-box;
}

.app {
  width: 60px;
  box-sizing: border-box;
  border: 1px solid transparent;
}

.app.open {
  border-color: #4b6583;
  border-radius: 3px;
  box-shadow: inset 0 0 0 1px #e8f2fc;
  background: linear-gradient(135deg, #e4eef8, #bdd4eb);
}

.app.stacked {
  width: 54px;
  margin-right: 6px;
  box-shadow: inset 0 0 0 1px #e8f2fc, 3px 0 0 -1px #dce9f6, 4px 0 0 0 #5d7795;
}

.tray {
  display: flex;
  align-items: center;
  gap: 8px;
  margin-left: auto;
  color: #fff;
  font-size: 11px;
}

.lang {
  margin-right: 6px;
  padding-bottom: 6px;
  color: #eaf0f6;
}

.clock {
  display: flex;
  flex-direction: column;
  align-items: center;
  width: 62px;
  margin-left: 7px;
  line-height: 17px;
}

.show-desktop {
  align-self: stretch;
  width: 15px;
  border: 1px solid #52677f;
  background: linear-gradient(135deg, #c3d3e3, #7f96b0);
}
</style>
